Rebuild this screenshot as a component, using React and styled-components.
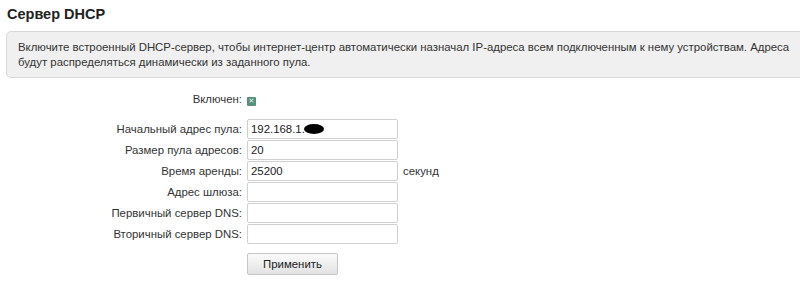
import React from "react";
import styled, { createGlobalStyle } from "styled-components";

const GlobalStyle = createGlobalStyle`
    html, body {
        margin: 0;
        padding: 0;
        background: #ffffff;
        overflow: hidden;
    }
    body {
        font-family: "Liberation Sans", Arial, sans-serif;
        font-size: 11.4px;
        color: #333333;
    }
`;

const Page = styled.div`
    width: 800px;
    height: 281px;
    padding-left: 6px;
    box-sizing: border-box;
`;

const Title = styled.h2`
    margin: 0;
    padding: 5px 0 0 1px;
    font-family: "Liberation Sans", Arial, sans-serif;
    font-size: 14.5px;
    font-weight: 700;
    line-height: 18px;
    color: #222222;
`;

const InfoBox = styled.div`
    margin-top: 8px;
    margin-right: -30px;
    padding: 8px 11px 7px;
    background: #f0f0f0;
    border: 1px solid #d9d9d9;
    border-radius: 5px;
    line-height: 15px;
    color: #333333;
`;

const Grid = styled.div`
    display: grid;
    grid-template-columns: 236px 151px auto;
    column-gap: 5px;
    row-gap: 1px;
    align-items: center;
    margin-top: ${(p) => p.$top || 0}px;
`;

const Label = styled.label`
    text-align: right;
    white-space: nowrap;
    line-height: 20px;
`;

const Check = styled.span`
    display: inline-flex;
    align-items: center;
    justify-content: center;
    width: 9px;
    height: 9px;
    margin-top: 1px;
    background: #56907f;
    border-radius: 1px;
    color: #e4f0ec;
    font-size: 7px;
    line-height: 9px;
    font-family: "DejaVu Sans", sans-serif;
`;

const FieldWrap = styled.div`
    position: relative;
    height: 20px;
`;

const Input = styled.input`
    display: block;
    width: 100%;
    height: 20px;
    box-sizing: border-box;
    margin: 0;
    padding: 0 3px;
    border: 1px solid #d0d0d0;
    border-radius: 2px;
    background: #ffffff;
    font-family: "Liberation Sans", Arial, sans-serif;
    font-size: 11.4px;
    color: #222222;
    outline: none;
`;

const Blob = styled.span`
    position: absolute;
    left: 57px;
    top: 5px;
    width: 20px;
    height: 10px;
    background: #000000;
    border-radius: 50%;
`;

const Unit = styled.span`
    white-space: nowrap;
`;

const Button = styled.button`
    grid-column: 2;
    justify-self: start;
    width: 91px;
    height: 22px;
    padding: 0;
    border: 1px solid #c6c6c6;
    border-radius: 2px;
    background: linear-gradient(#fbfbfb, #e2e2e2);
    font-family: "Liberation Sans", Arial, sans-serif;
    font-size: 11.4px;
    color: #222222;
`;

const fields = [
    { label: "Начальный адрес пула:", value: "192.168.1.", blob: true },
    { label: "Размер пула адресов:", value: "20" },
    { label: "Время аренды:", value: "25200", unit: "секунд" },
    { label: "Адрес шлюза:", value: "" },
    { label: "Первичный сервер DNS:", value: "" },
    { label: "Вторичный сервер DNS:", value: "" },
];

function App() {
    return (
        <Page>
            <GlobalStyle />
            <Title>Сервер DHCP</Title>
            <InfoBox>
                Включите встроенный DHCP-сервер, чтобы интернет-центр
                автоматически назначал IP-адреса всем подключенным к нему
                устройствам. Адреса будут распределяться динамически из
                заданного пула.
            </InfoBox>
            <Grid $top={11}>
                <Label>Включен:</Label>
                <div>
                    <Check>✕</Check>
                </div>
            </Grid>
            <Grid $top={10}>
                {fields.map((f, i) => (
                    <React.Fragment key={i}>
                        <Label>{f.label}</Label>
                        <FieldWrap>
                            <Input defaultValue={f.value} />
                            {f.blob && <Blob />}
                        </FieldWrap>
                        <Unit>{f.unit || ""}</Unit>
                    </React.Fragment>
                ))}
            </Grid>
            <Grid $top={9}>
                <Button>Применить</Button>
            </Grid>
        </Page>
    );
}

export default App;
